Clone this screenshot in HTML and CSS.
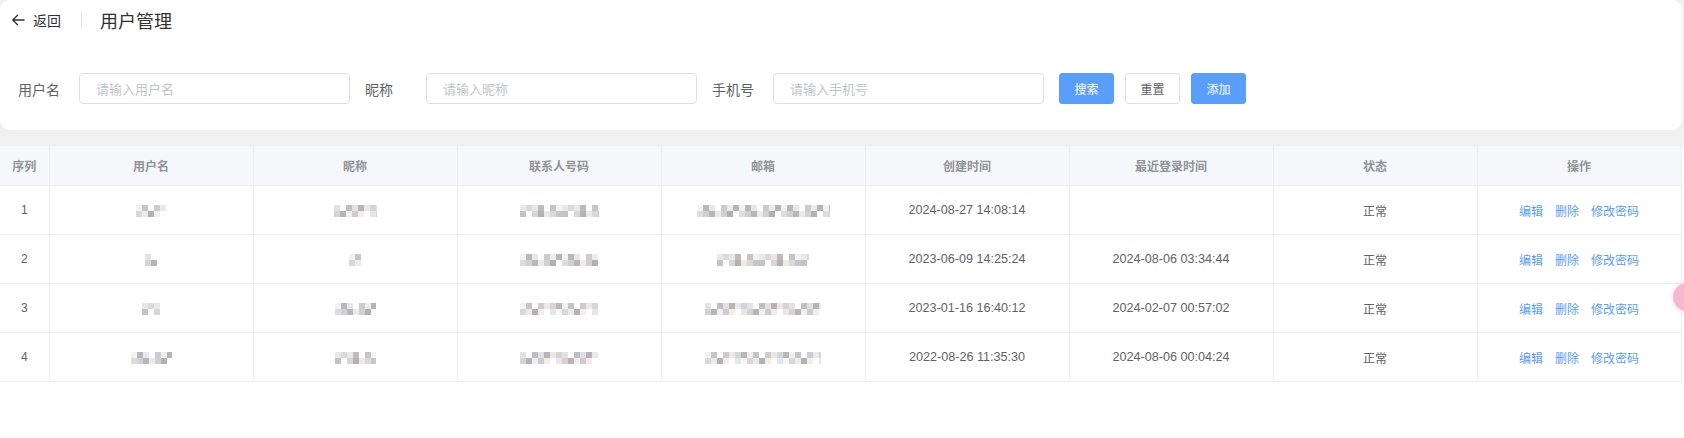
FILE: index.html
```html
<!DOCTYPE html>
<html lang="zh-CN">
<head>
<meta charset="utf-8">
<title>用户管理</title>
<link rel="stylesheet" href="styles.css">
</head>
<body>
<div class="page">
  <section class="card">
    <div class="topbar">
      <span class="back">
        <svg class="back-icon" viewBox="0 0 16 16" width="14" height="14"><path d="M7.5 2.5 L2 8 L7.5 13.5 M2 8 H15" fill="none" stroke="#303133" stroke-width="1.5" stroke-linecap="round" stroke-linejoin="round"/></svg>
        <span class="back-text">返回</span>
      </span>
      <span class="divider"></span>
      <span class="title">用户管理</span>
    </div>
    <div class="filters">
      <div class="field">
        <label class="label">用户名</label>
        <div class="input"><span class="ph">请输入用户名</span></div>
      </div>
      <div class="field">
        <label class="label">昵称</label>
        <div class="input"><span class="ph">请输入昵称</span></div>
      </div>
      <div class="field">
        <label class="label">手机号</label>
        <div class="input"><span class="ph">请输入手机号</span></div>
      </div>
      <div class="buttons">
        <button class="btn primary">搜索</button>
        <button class="btn">重置</button>
        <button class="btn primary">添加</button>
      </div>
    </div>
  </section>

  <section class="table-wrap">
    <table class="grid">
      <colgroup>
        <col class="c-idx"><col class="c-w"><col class="c-w"><col class="c-w"><col class="c-w"><col class="c-w"><col class="c-w"><col class="c-w"><col class="c-w">
      </colgroup>
      <thead>
        <tr>
          <th>序列</th><th>用户名</th><th>昵称</th><th>联系人号码</th><th>邮箱</th><th>创建时间</th><th>最近登录时间</th><th>状态</th><th>操作</th>
        </tr>
      </thead>
      <tbody>
        <tr>
          <td>1</td>
          <td><span class="mz m1 w30"></span></td>
          <td><span class="mz m2 w43"></span></td>
          <td><span class="mz m3 w79"></span></td>
          <td><span class="mz m4 w133"></span></td>
          <td class="num">2024-08-27 14:08:14</td>
          <td class="num"></td>
          <td>正常</td>
          <td class="ops"><a>编辑</a><a>删除</a><a>修改密码</a></td>
        </tr>
        <tr>
          <td>2</td>
          <td><span class="mz m2 w12"></span></td>
          <td><span class="mz m1 w12"></span></td>
          <td><span class="mz m4 w78"></span></td>
          <td><span class="mz m3 w92"></span></td>
          <td class="num">2023-06-09 14:25:24</td>
          <td class="num">2024-08-06 03:34:44</td>
          <td>正常</td>
          <td class="ops"><a>编辑</a><a>删除</a><a>修改密码</a></td>
        </tr>
        <tr>
          <td>3</td>
          <td><span class="mz m3 w18"></span></td>
          <td><span class="mz m4 w41"></span></td>
          <td><span class="mz m1 w78"></span></td>
          <td><span class="mz m2 w116"></span></td>
          <td class="num">2023-01-16 16:40:12</td>
          <td class="num">2024-02-07 00:57:02</td>
          <td>正常</td>
          <td class="ops"><a>编辑</a><a>删除</a><a>修改密码</a></td>
        </tr>
        <tr>
          <td>4</td>
          <td><span class="mz m4 w41"></span></td>
          <td><span class="mz m3 w41"></span></td>
          <td><span class="mz m2 w78"></span></td>
          <td><span class="mz m1 w116"></span></td>
          <td class="num">2022-08-26 11:35:30</td>
          <td class="num">2024-08-06 00:04:24</td>
          <td>正常</td>
          <td class="ops"><a>编辑</a><a>删除</a><a>修改密码</a></td>
        </tr>
      </tbody>
    </table>
  </section>
  <div class="float-ball"></div>
</div>
</body>
</html>
```

FILE: styles.css
```css
html, body {
  margin: 0;
  padding: 0;
  height: 100%;
  overflow: hidden;
}
body {
  background: #f0f0f0;
  font-family: "Liberation Sans", "Noto Sans CJK SC", sans-serif;
  color: #606266;
}
.page {
  position: relative;
  display: flex;
  flex-direction: column;
  height: 100%;
}
.card {
  width: 1682px;
  background: #fff;
  border-radius: 10px;
  margin-bottom: 16px;
}
.topbar {
  height: 40px;
  display: flex;
  align-items: center;
  padding-left: 11px;
}
.back {
  display: flex;
  align-items: center;
  gap: 8px;
  color: #303133;
  font-size: 14px;
}
.back-icon { display: block; }
.divider {
  width: 1px;
  height: 16px;
  background: #dcdfe6;
  margin: 0 18px 0 20px;
}
.title {
  font-size: 18px;
  color: #303133;
}
.filters {
  display: flex;
  align-items: center;
  padding: 33px 0 26px 18px;
}
.field {
  display: flex;
  align-items: center;
  margin-right: 15px;
}
.label {
  width: 61px;
  font-size: 14px;
  color: #606266;
}
.input {
  box-sizing: border-box;
  width: 271px;
  height: 31px;
  border: 1px solid #dcdfe6;
  border-radius: 4px;
  display: flex;
  align-items: center;
  padding-left: 16px;
}
.ph {
  font-size: 13px;
  color: #c0c4cc;
}
.buttons {
  display: flex;
  gap: 11px;
}
.btn {
  box-sizing: border-box;
  width: 55px;
  height: 31px;
  border: 1px solid #dcdfe6;
  border-radius: 3px;
  background: #fff;
  color: #606266;
  font-family: inherit;
  font-size: 12px;
  padding: 0;
}
.btn.primary {
  background: #599efa;
  border-color: #599efa;
  color: #fff;
}
.table-wrap {
  flex: 1;
  background: #fff;
}
.grid {
  width: 1681px;
  border-collapse: collapse;
  table-layout: fixed;
  border-right: 1px solid #ebeef5;
}
.c-idx { width: 49px; }
.c-w { width: 204px; }
.grid th {
  height: 39px;
  background: #f5f7fa;
  color: #909399;
  font-size: 12px;
  font-weight: bold;
  text-align: center;
  border-right: 1px solid #ebeef5;
  border-bottom: 1px solid #ebeef5;
  padding: 0;
}
.grid td {
  height: 48px;
  text-align: center;
  font-size: 12px;
  color: #606266;
  border-right: 1px solid #ebeef5;
  border-bottom: 1px solid #ebeef5;
  padding: 0;
}
.grid td.num { font-size: 12.6px; }
.ops a {
  color: #5a9cf8;
  margin: 0 6px;
}
.mz {
  display: inline-block;
  height: 12px;
  vertical-align: middle;
  background-repeat: no-repeat;
  background-size: 100% 6px, 100% 6px;
  background-position: top, bottom;
}
.m1 {
  background-image:
    repeating-linear-gradient(90deg, #f3f0f1 0 6px, #c9c2c7 6px 12px, #ffffff 12px 18px, #c7cdd3 18px 24px, #efe8e2 24px 30px, #d2d6dd 30px 36px, #bdb7bb 36px 42px),
    repeating-linear-gradient(90deg, #dcd6d9 0 6px, #e8ecf0 6px 12px, #b6b0b5 12px 18px, #f5eee6 18px 24px, #ffffff 24px 30px, #e3e7ed 30px 36px, #f7f7f8 36px 42px);
}
.m2 {
  background-image:
    repeating-linear-gradient(90deg, #e5e1e2 0 6px, #ffffff 6px 12px, #c2bdc1 12px 18px, #dde2e8 18px 24px, #b9b3b7 24px 30px, #ece7e3 30px 36px, #cfd5dc 36px 42px),
    repeating-linear-gradient(90deg, #d7d2d4 0 6px, #b7b3b6 6px 12px, #ecf0f4 12px 18px, #d1cbcd 18px 24px, #f2ede7 24px 30px, #ffffff 30px 36px, #e9e6e8 36px 42px);
}
.m3 {
  background-image:
    repeating-linear-gradient(90deg, #ebe7e7 0 6px, #d6dae1 6px 12px, #f0e6dc 12px 18px, #bfbabd 18px 24px, #ffffff 24px 30px, #c9c3c6 30px 36px, #f4f2f0 36px 42px),
    repeating-linear-gradient(90deg, #c6c1c4 0 6px, #ffffff 6px 12px, #d3d8de 12px 18px, #b5b0b4 18px 24px, #efe9e4 24px 30px, #dcd7d9 30px 36px, #c2c8cf 36px 42px);
}
.m4 {
  background-image:
    repeating-linear-gradient(90deg, #f5f2ef 0 6px, #bcb6ba 6px 12px, #e4e8ee 12px 18px, #ffffff 18px 24px, #c8cdd4 24px 30px, #f1ebe5 30px 36px, #b8b3b7 36px 42px),
    repeating-linear-gradient(90deg, #e0dbdd 0 6px, #cdd2d8 6px 12px, #bab5b8 12px 18px, #efeae6 18px 24px, #d4cfd2 24px 30px, #b3afb3 30px 36px, #ffffff 36px 42px);
}
.w12 { width: 12px; }
.w18 { width: 18px; }
.w30 { width: 30px; }
.w41 { width: 41px; }
.w43 { width: 43px; }
.w78 { width: 78px; }
.w79 { width: 79px; }
.w92 { width: 92px; }
.w116 { width: 116px; }
.w133 { width: 133px; }
.float-ball {
  position: absolute;
  left: 1673px;
  top: 283px;
  width: 28px;
  height: 28px;
  border-radius: 50%;
  background: #f6b8d1;
  box-shadow: 0 0 6px rgba(240, 150, 190, 0.35);
}
```
